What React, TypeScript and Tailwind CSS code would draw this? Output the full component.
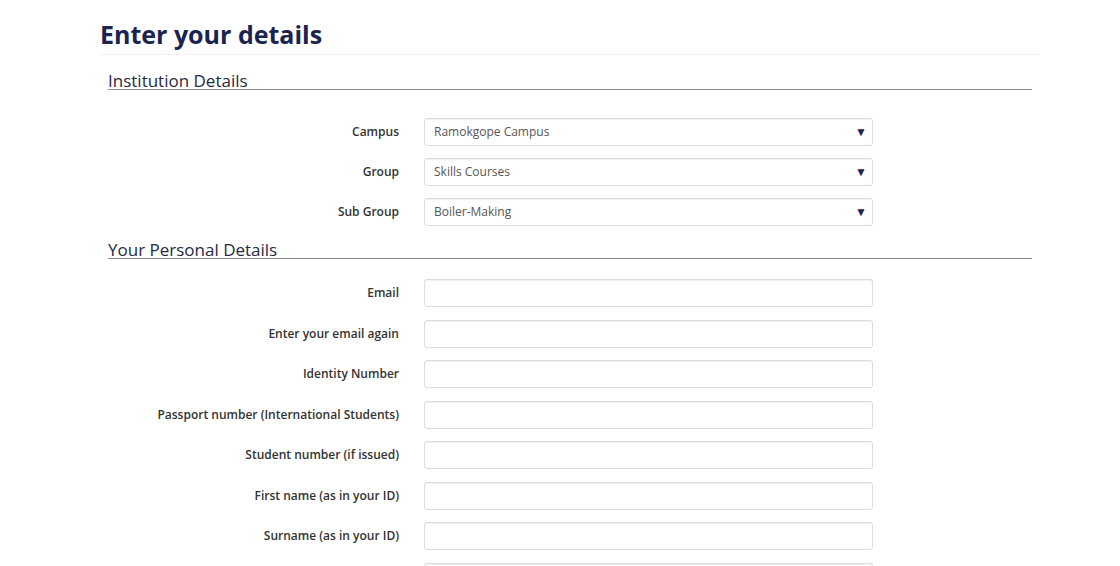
import React from "react";

const font = { fontFamily: '"Open Sans", "Noto Sans", sans-serif' };

function Select({ value }: { value: string }) {
  return (
    <div className="relative flex h-[28px] w-[449px] items-center rounded-[3px] border border-[#dcdcdc] bg-white pl-[9px] text-[12px] text-[#555] shadow-[inset_0_1px_1px_rgba(0,0,0,0.06)]">
      <span>{value}</span>
      <span className="absolute right-[5px] top-[6px] text-[12px] leading-[14px] text-[#1b2350]">▼</span>
    </div>
  );
}

function Input() {
  return (
    <div className="h-[28px] w-[449px] rounded-[3px] border border-[#dcdcdc] bg-white shadow-[inset_0_1px_1px_rgba(0,0,0,0.06)]" />
  );
}

function Row({ label, children }: { label: string; children: React.ReactNode }) {
  return (
    <div className="flex items-center">
      <div className="w-[399px] shrink-0 text-right text-[12px] font-semibold text-[#333]">{label}</div>
      <div className="ml-[25px]">{children}</div>
    </div>
  );
}

function Section({ title }: { title: string }) {
  return (
    <div className="ml-[8px] mr-[8px] border-b border-[#8a8a8a] text-[17px] leading-[16px] text-[#262a45]">
      {title}
    </div>
  );
}

export default function App() {
  const personal = [
    "Email",
    "Enter your email again",
    "Identity Number",
    "Passport number (International Students)",
    "Student number (if issued)",
    "First name (as in your ID)",
    "Surname (as in your ID)",
    "",
  ];
  return (
    <div className="h-[566px] w-[1120px] overflow-hidden bg-white" style={font}>
      <div className="ml-[100px] w-[940px]">
        <h1 className="pt-[17px] pb-[3px] text-[25px] font-bold leading-[34px] text-[#1b2350] border-b border-[#f0f0f0]">
          Enter your details
        </h1>
        <div className="mt-[18px]">
          <Section title="Institution Details" />
        </div>
        <div className="ml-[-100px] mt-[28px] flex flex-col gap-[12px]">
          <Row label="Campus"><Select value="Ramokgope Campus" /></Row>
          <Row label="Group"><Select value="Skills Courses" /></Row>
          <Row label="Sub Group"><Select value="Boiler-Making" /></Row>
        </div>
        <div className="mt-[16px]">
          <Section title="Your Personal Details" />
        </div>
        <div className="ml-[-100px] mt-[20px] flex flex-col gap-[12.5px]">
          {personal.map((l, i) => (
            <Row key={i} label={l}><Input /></Row>
          ))}
        </div>
      </div>
    </div>
  );
}
